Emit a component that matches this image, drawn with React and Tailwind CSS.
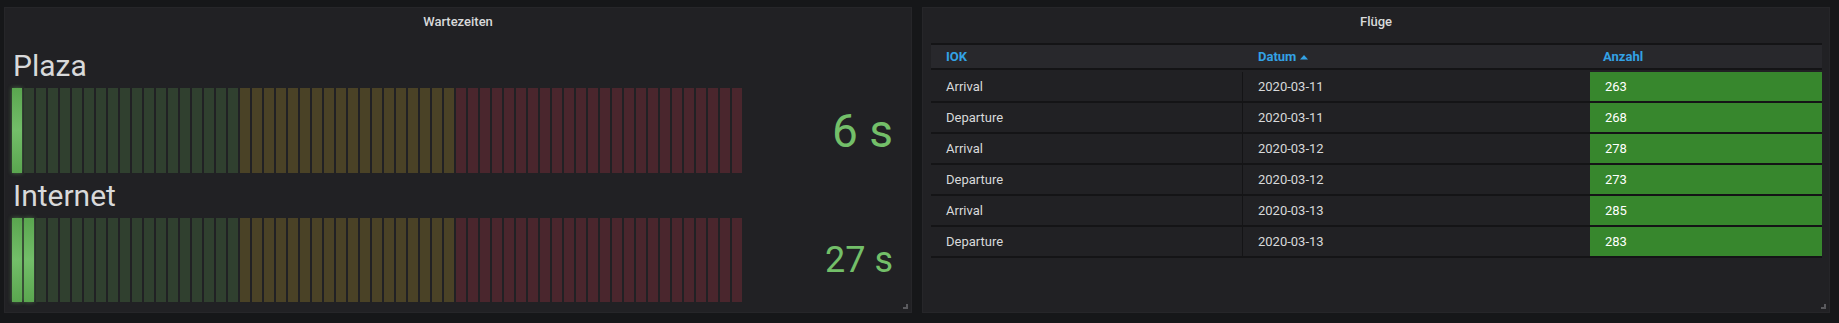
import React from "react";

const TOTAL = 61;
const GREEN_END = 19;
const YELLOW_END = 37;

function Cell({ i, lit }) {
  let cls = "";
  if (i < lit) {
    cls = "bg-gradient-to-b from-[#5aa64f] via-[#73bf69] to-[#5aa64f] shadow-[0_0_4px_rgba(115,191,105,0.5)]";
  } else if (i < GREEN_END) {
    cls = "bg-[#30402f]";
  } else if (i < YELLOW_END) {
    cls = "bg-[#4a4226]";
  } else {
    cls = "bg-[#4a262d]";
  }
  return <div className={"w-[10px] h-full shrink-0 " + cls} />;
}

function Gauge({ label, value, lit, valueClass, barH, mt }) {
  const cells = [];
  for (let i = 0; i < TOTAL; i++) cells.push(<Cell key={i} i={i} lit={lit} />);
  return (
    <div className={"flex flex-col " + mt}>
      <div className="text-[30px] leading-[36px] text-[#d8d9da] pl-[1px]">{label}</div>
      <div className="flex items-center mt-[4px]">
        <div className={"flex gap-[2px] w-[730px] " + barH}>{cells}</div>
        <div className="flex-1 flex justify-end">
          <span className={"text-[#73bf69] " + valueClass}>{value}</span>
        </div>
      </div>
    </div>
  );
}

function ResizeHandle() {
  return (
    <div className="absolute right-[3px] bottom-[3px] w-[5px] h-[5px] border-r-[2px] border-b-[2px] border-[#5a5a5e]" />
  );
}

const rows = [
  ["Arrival", "2020-03-11", "263"],
  ["Departure", "2020-03-11", "268"],
  ["Arrival", "2020-03-12", "278"],
  ["Departure", "2020-03-12", "273"],
  ["Arrival", "2020-03-13", "285"],
  ["Departure", "2020-03-13", "283"],
];

export default function App() {
  return (
    <div
      className="w-[1839px] h-[323px] bg-[#161719] flex gap-[10px] pl-[4px] pt-[7px] overflow-hidden"
      style={{ fontFamily: "Roboto, 'Liberation Sans', sans-serif" }}
    >
      {/* Left panel */}
      <div className="relative w-[908px] h-[306px] bg-[#212124] border border-[#262629] flex flex-col">
        <div className="h-[27px] flex items-center justify-center text-[13px] font-medium text-[#d8d9da]">
          Wartezeiten
        </div>
        <div className="flex flex-col pl-[7px] pr-[18px] pt-[13px]">
          <Gauge
            label="Plaza"
            value="6 s"
            lit={1}
            barH="h-[85px]"
            mt=""
            valueClass="text-[46px] leading-[46px]"
          />
          <Gauge
            label="Internet"
            value="27 s"
            lit={2}
            barH="h-[84px]"
            mt="mt-[5px]"
            valueClass="text-[36px] leading-[36px]"
          />
        </div>
        <ResizeHandle />
      </div>

      {/* Right panel */}
      <div className="relative w-[908px] h-[306px] bg-[#212124] border border-[#262629] flex flex-col">
        <div className="h-[27px] flex items-center justify-center text-[13px] font-medium text-[#d8d9da]">
          Flüge
        </div>
        <div className="pl-[8px] pr-[7px] mt-[8px]">
          <div className="flex h-[27px] border-t-[2px] border-b-[2px] border-[#141416] bg-[#28282c] text-[13px] font-bold text-[#33a2e5] items-center">
            <div className="w-[312px] pl-[15px]">IOK</div>
            <div className="w-[347px] pl-[15px] flex items-center gap-[4px]">
              Datum
              <svg width="8" height="6" viewBox="0 0 8 6" className="mt-[1px]">
                <path d="M0 5.5 L4 1 L8 5.5 Z" fill="#33a2e5" />
              </svg>
            </div>
            <div className="flex-1 pl-[13px]">Anzahl</div>
          </div>
          <div className="pt-[2px]">
            {rows.map((r, idx) => (
              <div key={idx} className="flex h-[31px] border-b-[2px] border-[#141416] text-[13px] text-[#d8d9da]">
                <div className="w-[312px] pl-[15px] flex items-center border-r border-[#141416]">{r[0]}</div>
                <div className="w-[347px] pl-[15px] flex items-center">{r[1]}</div>
                <div className="flex-1 pl-[15px] flex items-center bg-[#37872d] text-white">{r[2]}</div>
              </div>
            ))}
          </div>
        </div>
        <ResizeHandle />
      </div>
    </div>
  );
}
